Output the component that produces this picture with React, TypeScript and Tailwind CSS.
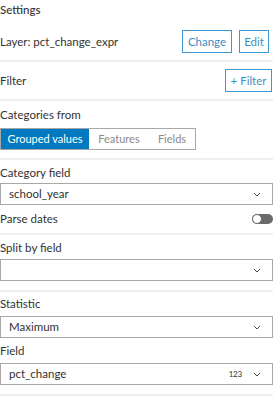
import { useState } from 'react';

function Divider({ className = '' }: { className?: string }) {
  return <div className={`h-[2px] bg-[#eeeeee] ${className}`} />;
}

function Chevron() {
  return (
    <svg width="8" height="5" viewBox="0 0 8 5" className="shrink-0">
      <path d="M1 1 L4 4 L7 1" fill="none" stroke="#4a4a4a" strokeWidth="1" />
    </svg>
  );
}

function Select({ value, badge, className = '' }: { value?: string; badge?: string; className?: string }) {
  return (
    <div className={`h-[22px] border border-[#a8a8a8] flex items-center pl-[8px] pr-[11px] ${className}`}>
      <span className="flex-1 text-[#323232]">{value}</span>
      {badge && <span className="text-[8px] text-[#323232] mr-[11px] tracking-tight">{badge}</span>}
      <Chevron />
    </div>
  );
}

function OutlineButton({ label, className = '' }: { label: string; className?: string }) {
  return (
    <button className={`h-[23px] border border-[#3a9ad4] text-[#3c8fc4] flex items-center justify-center ${className}`}>
      {label}
    </button>
  );
}

export default function App() {
  const [tab, setTab] = useState('Grouped values');
  const tabs = [
    { label: 'Grouped values', w: 'w-[88px]' },
    { label: 'Features', w: 'w-[60px]' },
    { label: 'Fields', w: 'w-[46px]' },
  ];

  return (
    <div className="w-[275px] h-[400px] bg-white text-[11.5px] leading-[16px] text-[#323232] font-['Lato',sans-serif] pr-[2px] overflow-hidden">
      <div className="h-[20px] flex items-center font-medium">Settings</div>

      <div className="mt-[10px] flex items-center">
        <span className="flex-1">Layer: pct_change_expr</span>
        <OutlineButton label="Change" className="w-[50px]" />
        <OutlineButton label="Edit" className="w-[30px] ml-[7px] mr-[4px]" />
      </div>

      <Divider className="mt-[7px]" />

      <div className="mt-[7px] flex items-center">
        <span className="flex-1">Filter</span>
        <OutlineButton label="+ Filter" className="w-[47px] mr-[1px]" />
      </div>

      <Divider className="mt-[7px]" />

      <div className="mt-[6px]">Categories from</div>
      <div className="mt-[5px] w-fit h-[22px] border border-[#a8a8a8] flex text-[11px]">
        {tabs.map((t) => (
          <button
            key={t.label}
            onClick={() => setTab(t.label)}
            className={`${t.w} h-full ${t.label === tab ? 'bg-[#0079c1] text-white' : 'text-[#8a8a8a]'}`}
          >
            {t.label}
          </button>
        ))}
      </div>

      <Divider className="mt-[8px]" />

      <div className="mt-[5px]">Category field</div>
      <Select value="school_year" className="mt-[2px]" />

      <div className="mt-[6px] flex items-center">
        <span className="flex-1">Parse dates</span>
        <div className="w-[21px] h-[10px] rounded-full bg-[#6b6b6b] relative">
          <div className="absolute left-0 top-0 w-[10px] h-[10px] rounded-full bg-white border border-[#6b6b6b]" />
        </div>
      </div>

      <Divider className="mt-[6px]" />

      <div className="mt-[5px]">Split by field</div>
      <Select className="mt-[3px]" />

      <Divider className="mt-[9px]" />

      <div className="mt-[4px]">Statistic</div>
      <Select value="Maximum" className="mt-[4px]" />

      <div className="mt-[5px]">Field</div>
      <Select value="pct_change" badge="123" className="mt-[4px]" />

      <Divider className="mt-[9px]" />
    </div>
  );
}
